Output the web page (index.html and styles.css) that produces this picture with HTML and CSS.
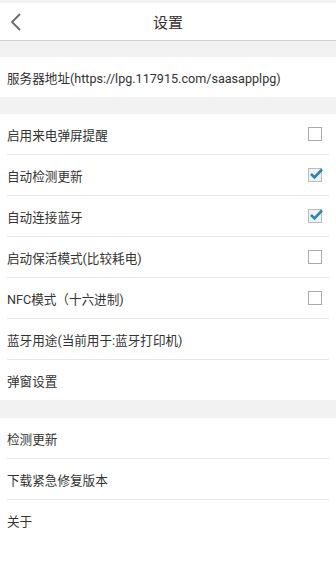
FILE: index.html
```html
<!DOCTYPE html>
<html lang="zh">
<head>
    <meta charset="UTF-8">
    <meta name="viewport" content="width=device-width, initial-scale=1.0">
    <title>设置</title>
    <link rel="stylesheet" href="styles.css">
</head>
<body>
    <div class="header">
        <span class="back">
            <svg width="12" height="18" viewBox="0 0 12 18"><path d="M10 1 L2 9 L10 17" fill="none" stroke="#6a6a6a" stroke-width="1.8"/></svg>
        </span>
        <h1>设置</h1>
    </div>

    <div class="group">
        <div class="row">服务器地址(https://lpg.117915.com/saasapplpg)</div>
    </div>

    <div class="group second">
        <div class="row">启用来电弹屏提醒<span class="check"></span></div>
        <div class="row">自动检测更新<span class="check on"><svg width="14" height="12" viewBox="0 0 14 12"><path d="M2 6 L5.5 9.5 L13 1.5" fill="none" stroke="#2d86b3" stroke-width="2.6"/></svg></span></div>
        <div class="row">自动连接蓝牙<span class="check on"><svg width="14" height="12" viewBox="0 0 14 12"><path d="M2 6 L5.5 9.5 L13 1.5" fill="none" stroke="#2d86b3" stroke-width="2.6"/></svg></span></div>
        <div class="row">启动保活模式(比较耗电)<span class="check"></span></div>
        <div class="row">NFC模式（十六进制)<span class="check"></span></div>
        <div class="row">蓝牙用途(当前用于:蓝牙打印机)</div>
        <div class="row">弹窗设置</div>
    </div>

    <div class="group last">
        <div class="row">检测更新</div>
        <div class="row">下载紧急修复版本</div>
        <div class="row">关于</div>
    </div>
</body>
</html>
```

FILE: styles.css
```css
body {
    margin: 0;
    padding-top: 3px;
    background-color: #f2f2f2;
    font-family: Roboto, "Noto Sans CJK SC", sans-serif;
    color: #333;
}
.header {
    position: relative;
    height: 37px;
    background-color: #fff;
    border-bottom: 1px solid #d0d0d0;
    display: flex;
    align-items: center;
    justify-content: center;
}
.header h1 {
    margin: 0;
    font-size: 15px;
    font-weight: normal;
    color: #333;
}
.back {
    position: absolute;
    left: 10px;
    top: 10px;
    display: flex;
}
.group {
    background-color: #fff;
    margin-top: 16px;
    padding: 0 7px;
}
.group.second {
    margin-top: 17px;
}
.group.last {
    margin-top: 18px;
    padding-bottom: 60px;
}
.row {
    height: 40px;
    display: flex;
    align-items: center;
    justify-content: space-between;
    font-size: 12.6px;
    border-bottom: 1px solid #e6e6e6;
}
.row:last-child {
    border-bottom: none;
}
.check {
    width: 12px;
    height: 12px;
    border: 1px solid #aaa;
    margin-right: 7px;
    position: relative;
}
.check.on {
    background-color: #eef2f4;
    border-color: #bbb;
}
.check svg {
    position: absolute;
    left: 0;
    top: -1px;
}
```
